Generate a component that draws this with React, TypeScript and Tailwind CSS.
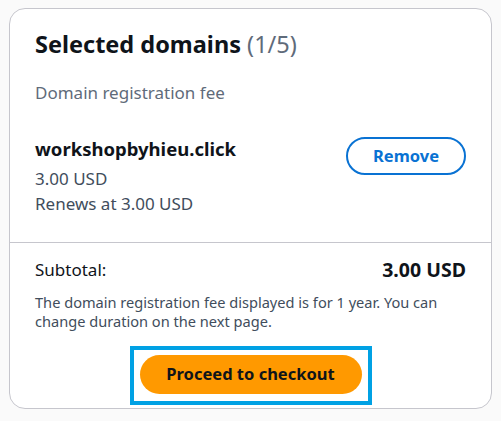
export default function App() {
  return (
    <div
      className="min-h-[421px] w-full bg-[#fafafa] pl-[9px] pt-[8px]"
      style={{ fontFamily: '"Noto Sans", "Open Sans", Arial, sans-serif' }}
    >
      <div className="h-[401px] w-[483px] rounded-[16px] border border-[#c6c6cd] bg-white">
        <div className="px-[25px] pt-[20px]">
          <h2 className="text-[23.5px] font-bold leading-[30px] text-[#0f141a]">
            Selected domains <span className="font-normal text-[#5f6b7a]">(1/5)</span>
          </h2>
          <p className="mt-[22px] text-[17px] leading-[24px] text-[#5f6b7a]">Domain registration fee</p>
          <div className="mt-[32px] flex items-start justify-between">
            <div>
              <div className="text-[18.5px] font-bold leading-[24px] text-[#0f141a]">workshopbyhieu.click</div>
              <div className="mt-[6px] text-[17px] leading-[24px] text-[#414d5c]">3.00 USD</div>
              <div className="mt-[1px] text-[17px] leading-[24px] text-[#414d5c]">Renews at 3.00 USD</div>
            </div>
            <button className="h-[38px] w-[120px] rounded-full border-2 border-[#0972d3] text-[16.5px] font-bold text-[#0972d3]">
              Remove
            </button>
          </div>
        </div>
        <div className="mt-[26px] border-t border-[#c6c6cd]" />
        <div className="px-[25px] pt-[15px]">
          <div className="flex items-center justify-between">
            <span className="text-[17px] leading-[24px] text-[#0f141a]">Subtotal:</span>
            <span className="text-[19.5px] font-bold leading-[24px] text-[#0f141a]">3.00 USD</span>
          </div>
          <p className="mt-[11px] text-[14.6px] leading-[19px] text-[#414d5c]">
            The domain registration fee displayed is for 1 year. You can change duration on the next page.
          </p>
          <div className="mt-[15px] flex justify-center">
            <div className="border-4 border-[#00a1e4] px-[6px] pb-[7px] pt-[5px]">
              <button className="h-[39px] w-[222px] rounded-full bg-[#ff9900] text-[16.5px] font-bold text-[#0f141a]">
                Proceed to checkout
              </button>
            </div>
          </div>
        </div>
      </div>
    </div>
  );
}
